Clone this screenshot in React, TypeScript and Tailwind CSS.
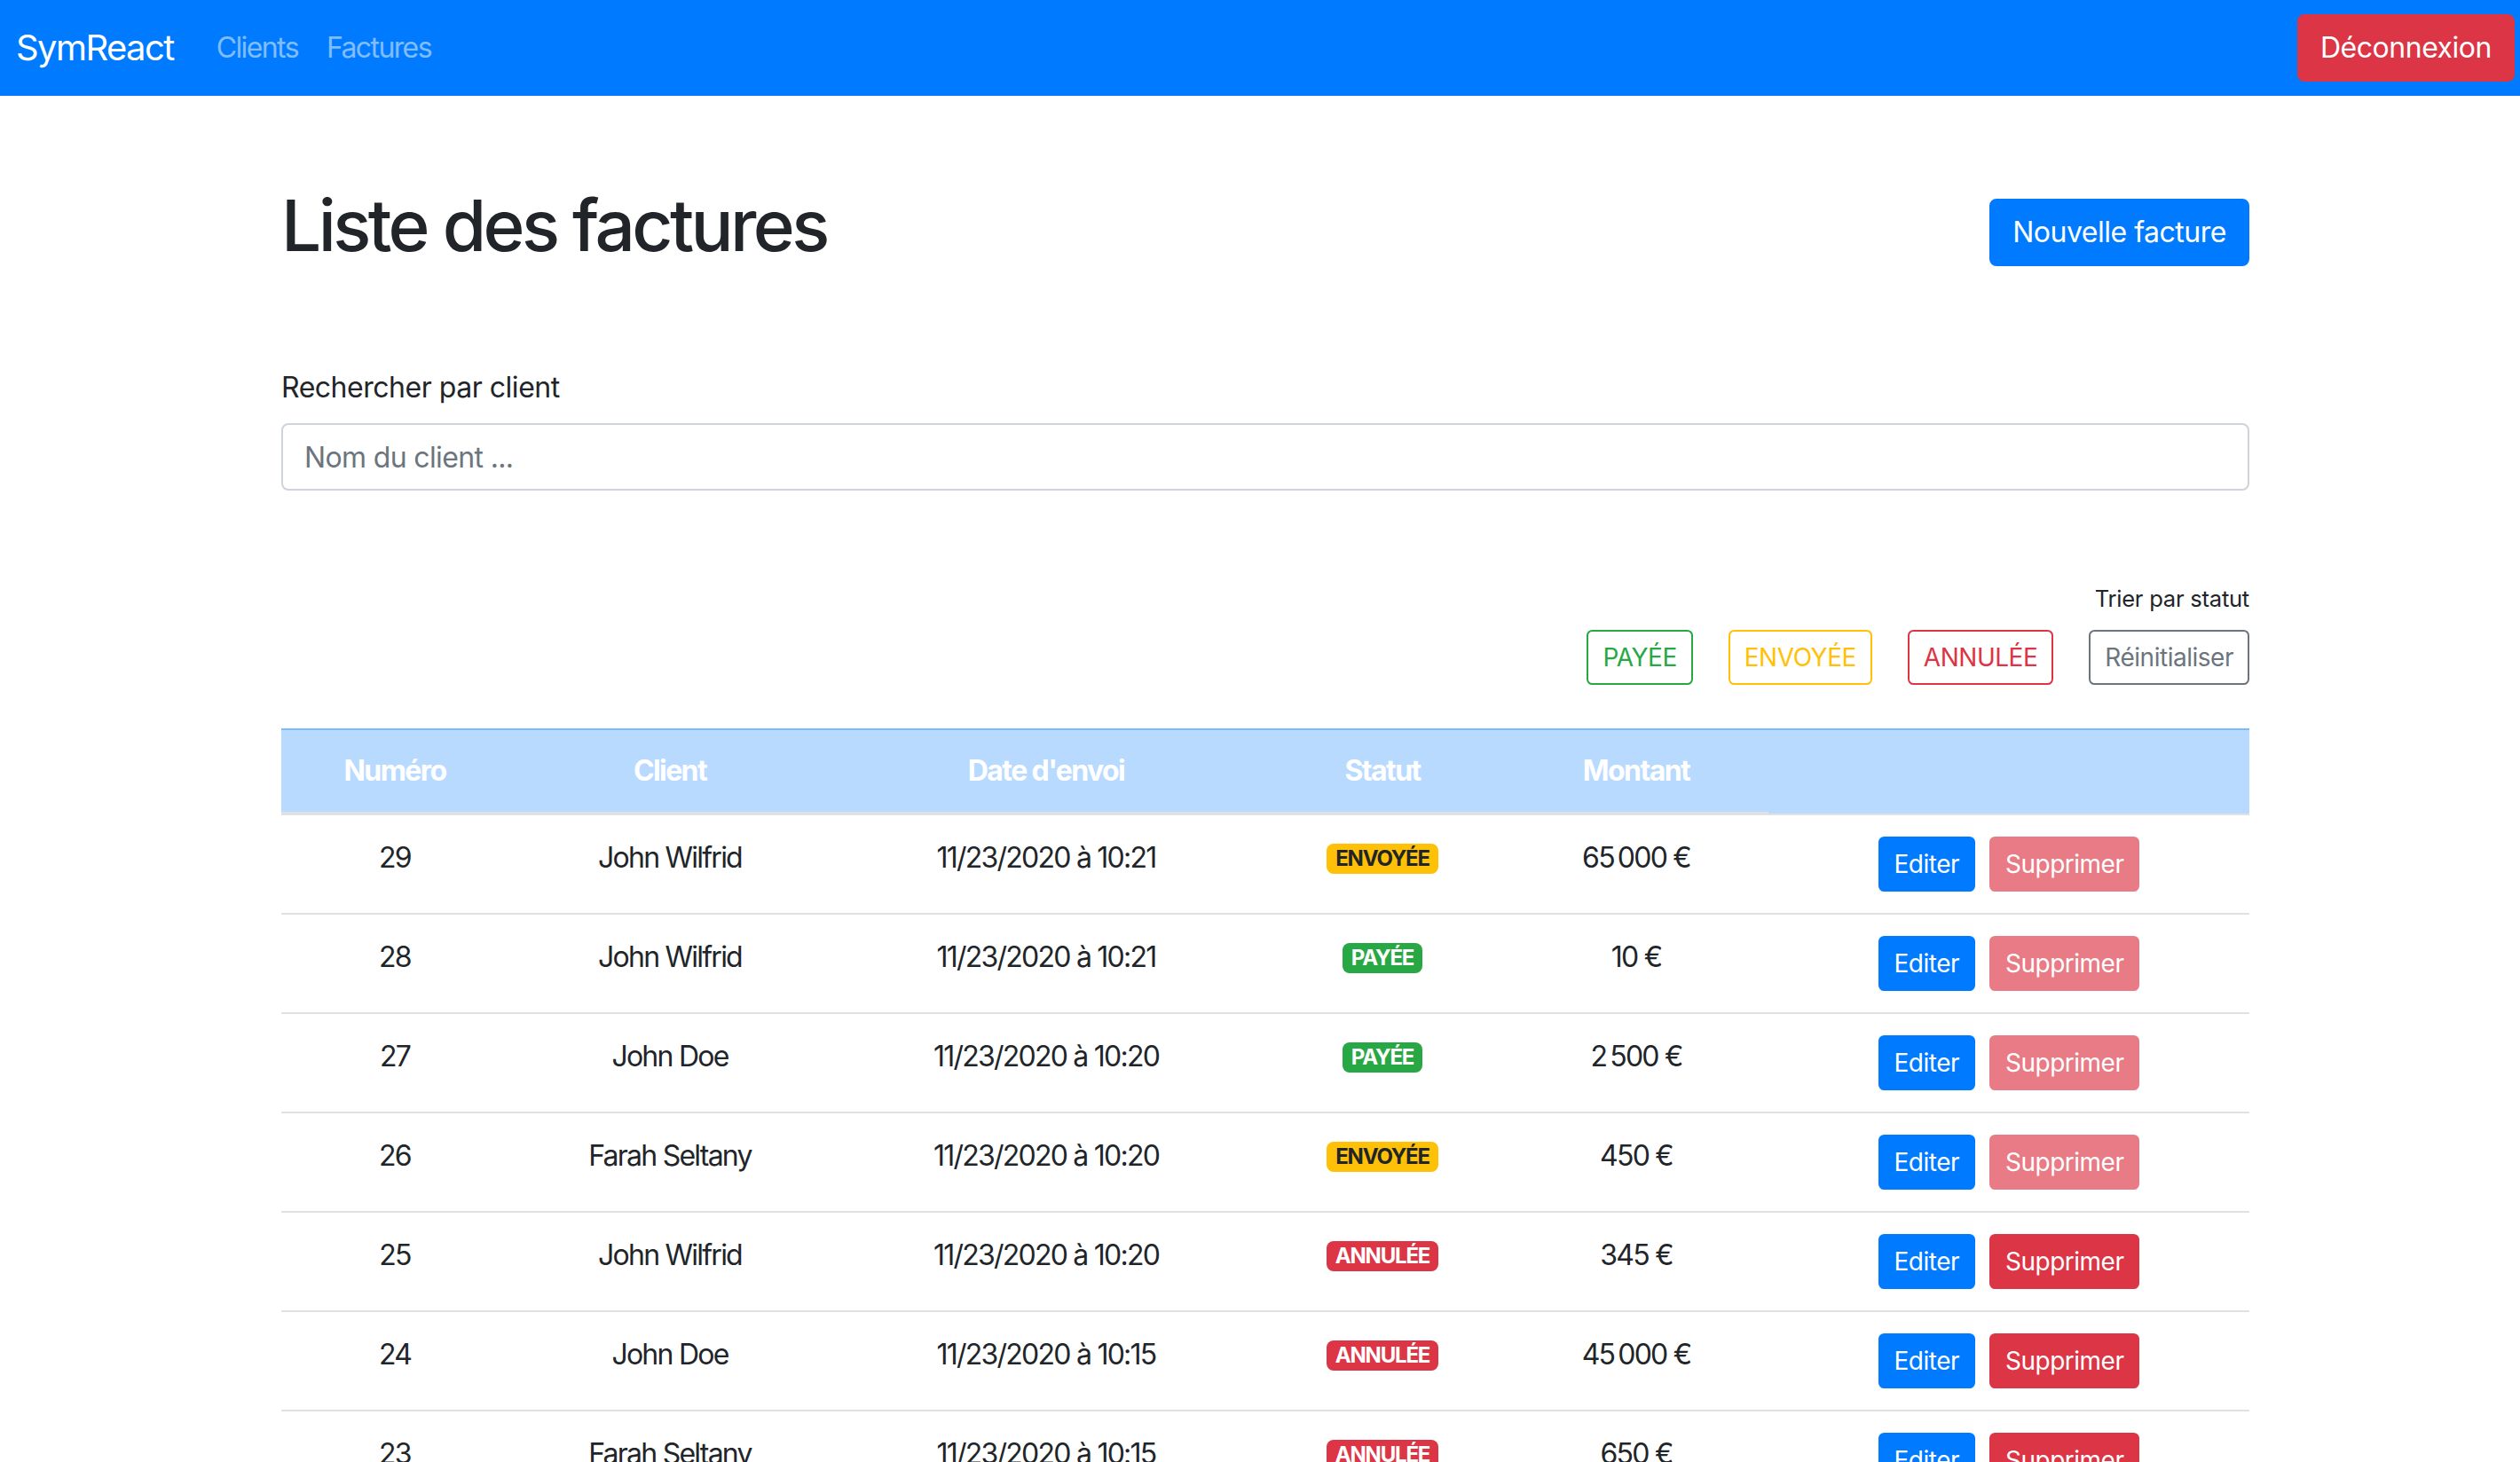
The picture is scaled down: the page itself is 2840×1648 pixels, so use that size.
import React from 'react';

type Status = 'PAID' | 'SENT' | 'CANCELLED';

interface Invoice {
  id: number;
  customer: string;
  sentAt: string;
  status: Status;
  amount: number;
}

const invoices: Invoice[] = [
  { id: 29, customer: 'John Wilfrid', sentAt: '11/23/2020 à 10:21', status: 'SENT', amount: 65000 },
  { id: 28, customer: 'John Wilfrid', sentAt: '11/23/2020 à 10:21', status: 'PAID', amount: 10 },
  { id: 27, customer: 'John Doe', sentAt: '11/23/2020 à 10:20', status: 'PAID', amount: 2500 },
  { id: 26, customer: 'Farah Seltany', sentAt: '11/23/2020 à 10:20', status: 'SENT', amount: 450 },
  { id: 25, customer: 'John Wilfrid', sentAt: '11/23/2020 à 10:20', status: 'CANCELLED', amount: 345 },
  { id: 24, customer: 'John Doe', sentAt: '11/23/2020 à 10:15', status: 'CANCELLED', amount: 45000 },
  { id: 23, customer: 'Farah Seltany', sentAt: '11/23/2020 à 10:15', status: 'CANCELLED', amount: 650 },
];

const STATUS_LABELS: Record<Status, string> = {
  PAID: 'PAYÉE',
  SENT: 'ENVOYÉE',
  CANCELLED: 'ANNULÉE',
};

const STATUS_CLASSES: Record<Status, string> = {
  PAID: 'bg-[#28a745] text-white',
  SENT: 'bg-[#ffc107] text-[#212529]',
  CANCELLED: 'bg-[#dc3545] text-white',
};

const StatusBadge: React.FC<{ status: Status }> = ({ status }) => (
  <span
    className={`inline-block rounded-[8px] px-[10px] py-[5px] align-[2px] text-[24px] leading-none font-bold tracking-[-0.05em] ${STATUS_CLASSES[status]}`}
  >
    {STATUS_LABELS[status]}
  </span>
);

// fr-FR style: thin gap between thousands, then " €"
const Amount: React.FC<{ value: number }> = ({ value }) => {
  const thousands = Math.floor(value / 1000);
  const rest = value % 1000;
  return (
    <span className="whitespace-nowrap">
      {thousands > 0 ? (
        <>
          {thousands}
          <span className="inline-block w-[4px]"></span>
          {String(rest).padStart(3, '0')}
        </>
      ) : (
        rest
      )}
      {'\u00a0€'}
    </span>
  );
};

const Navbar: React.FC = () => (
  <nav className="flex h-[108px] items-center justify-between bg-[#007bff] pl-[18px] pr-[6px]">
    <div className="flex items-center">
      <a className="mr-[32px] text-[40px] leading-[60px] tracking-[-0.04em] text-white">SymReact</a>
      <a className="px-[16px] text-[32px] leading-[48px] tracking-[-0.05em] text-white/50">Clients</a>
      <a className="px-[16px] text-[32px] leading-[48px] tracking-[-0.05em] text-white/50">Factures</a>
    </div>
    <button className="h-[76px] rounded-[8px] border-2 border-[#dc3545] bg-[#dc3545] px-[24px] text-[32px] leading-[48px] text-white">
      Déconnexion
    </button>
  </nav>
);

const filterButtons = [
  { label: 'PAYÉE', classes: 'border-[#28a745] text-[#28a745]' },
  { label: 'ENVOYÉE', classes: 'border-[#ffc107] text-[#ffc107]' },
  { label: 'ANNULÉE', classes: 'border-[#dc3545] text-[#dc3545]' },
  { label: 'Réinitialiser', classes: 'border-[#6c757d] text-[#6c757d]' },
];

const headers = ['Numéro', 'Client', "Date d'envoi", 'Statut', 'Montant'];

export default function App() {
  return (
    <div className="h-[1648px] overflow-hidden bg-white font-['Inter','Noto_Sans',sans-serif] tracking-[-0.03em] text-[#212529]">
      <Navbar />

      <main className="pl-[317px]">
        <div className="w-[2218px]">
          <div className="flex items-start justify-between pt-[98px]">
            <h1 className="text-[80px] leading-[96px] font-medium tracking-[-0.045em]">Liste des factures</h1>
            <button className="mt-[18px] h-[76px] rounded-[8px] border-2 border-[#007bff] bg-[#007bff] px-[24px] text-[32px] leading-[48px] text-white">
              Nouvelle facture
            </button>
          </div>

          <div className="mt-[111px]">
            <label className="block text-[32px] leading-[48px]">Rechercher par client</label>
            <input
              type="text"
              placeholder="Nom du client ..."
              className="mt-[16px] block h-[76px] w-full rounded-[8px] border-2 border-[#ced4da] px-[24px] text-[32px] tracking-[-0.02em] text-[#495057] placeholder:text-[#6c757d] focus:outline-none"
            />
          </div>

          <div className="mt-[103px] flex flex-col items-end">
            <small className="text-[25.6px] leading-[38.4px] tracking-[-0.01em]">Trier par statut</small>
            <div className="mt-[16px] flex gap-[40px]">
              {filterButtons.map((b) => (
                <button
                  key={b.label}
                  className={`h-[62px] rounded-[6.4px] border-2 bg-white px-[16px] text-[28px] leading-[42px] ${b.classes}`}
                >
                  {b.label}
                </button>
              ))}
            </div>
          </div>

          <table className="mt-[49px] w-full table-fixed border-separate border-spacing-0 text-center">
            <colgroup>
              <col className="w-[256px]" />
              <col className="w-[364px]" />
              <col className="w-[484px]" />
              <col className="w-[274px]" />
              <col className="w-[298px]" />
              <col className="w-[542px]" />
            </colgroup>
            <thead>
              <tr className="bg-[#b8daff]">
                {headers.map((h) => (
                  <th
                    key={h}
                    className="border-t-2 border-b-4 border-t-[#7abaff] border-b-[#dee2e6] py-[22px] text-[32px] leading-[48px] font-bold tracking-[-0.05em] text-white"
                  >
                    {h}
                  </th>
                ))}
                <th className="border-t-2 border-b-2 border-t-[#7abaff] border-b-[#dee2e6]"></th>
              </tr>
            </thead>
            <tbody>
              {invoices.map((invoice, i) => {
                const cell = `${i === 0 ? '' : 'border-t-2 border-[#dee2e6]'} py-[24px] align-top text-[32px] leading-[48px] tracking-[-0.055em]`;
                const canDelete = invoice.status === 'CANCELLED';
                return (
                  <tr key={invoice.id}>
                    <td className={cell}>{invoice.id}</td>
                    <td className={cell}>{invoice.customer}</td>
                    <td className={cell}>{invoice.sentAt}</td>
                    <td className={cell}>
                      <StatusBadge status={invoice.status} />
                    </td>
                    <td className={cell}>
                      <Amount value={invoice.amount} />
                    </td>
                    <td className={cell}>
                      <div className="flex justify-center gap-[16px] tracking-[-0.5px]">
                        <button className="h-[62px] rounded-[6.4px] border-2 border-[#007bff] bg-[#007bff] px-[16px] text-[28px] leading-[42px] text-white">
                          Editer
                        </button>
                        <button
                          disabled={!canDelete}
                          className={`h-[62px] rounded-[6.4px] border-2 border-[#dc3545] bg-[#dc3545] px-[16px] text-[28px] leading-[42px] text-white ${canDelete ? '' : 'opacity-65'}`}
                        >
                          Supprimer
                        </button>
                      </div>
                    </td>
                  </tr>
                );
              })}
            </tbody>
          </table>
        </div>
      </main>
    </div>
  );
}
